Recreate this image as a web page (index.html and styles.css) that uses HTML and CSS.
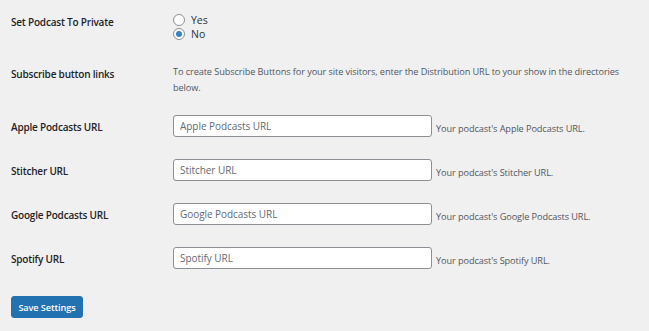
FILE: index.html
```html
<!DOCTYPE html>
<html lang="en">

<head>
  <meta charset="UTF-8" />
  <meta name="viewport" content="width=device-width, initial-scale=1" />
  <title>Podcast Settings</title>
  <link rel="stylesheet" href="styles.css">
</head>

<body>

  <form class="settings">
    <div class="form-row first">
      <div class="row-label">Set Podcast To Private</div>
      <div class="row-field">
        <label class="radio"><input type="radio" name="private" value="yes" /> Yes</label>
        <label class="radio"><input type="radio" name="private" value="no" checked /> No</label>
      </div>
    </div>

    <div class="form-row intro">
      <div class="row-label">Subscribe button links</div>
      <div class="row-field">
        <p class="description">To create Subscribe Buttons for your site visitors, enter the Distribution URL to your show in the directories below.</p>
      </div>
    </div>

    <div class="form-row url">
      <label class="row-label" for="appleUrl">Apple Podcasts URL</label>
      <div class="row-field">
        <input type="text" id="appleUrl" placeholder="Apple Podcasts URL" />
        <span class="hint">Your podcast's Apple Podcasts URL.</span>
      </div>
    </div>

    <div class="form-row url">
      <label class="row-label" for="stitcherUrl">Stitcher URL</label>
      <div class="row-field">
        <input type="text" id="stitcherUrl" placeholder="Stitcher URL" />
        <span class="hint">Your podcast's Stitcher URL.</span>
      </div>
    </div>

    <div class="form-row url">
      <label class="row-label" for="googleUrl">Google Podcasts URL</label>
      <div class="row-field">
        <input type="text" id="googleUrl" placeholder="Google Podcasts URL" />
        <span class="hint">Your podcast's Google Podcasts URL.</span>
      </div>
    </div>

    <div class="form-row url">
      <label class="row-label" for="spotifyUrl">Spotify URL</label>
      <div class="row-field">
        <input type="text" id="spotifyUrl" placeholder="Spotify URL" />
        <span class="hint">Your podcast's Spotify URL.</span>
      </div>
    </div>

    <button type="button" class="save-btn">Save Settings</button>
  </form>

</body>

</html>
```

FILE: styles.css
```css
body {
  font-family: "Open Sans", "Noto Sans", Arial, sans-serif;
  background: #f0f0f1;
  color: #1d2327;
  margin: 0;
  padding: 0;
}

.settings {
  padding: 2px 11px 0;
}

.form-row {
  display: grid;
  grid-template-columns: 162px 1fr;
  align-items: start;
}

.row-label {
  font-size: 10px;
  font-weight: 600;
  letter-spacing: -0.2px;
  line-height: 14px;
  color: #1d2327;
}

.row-field {
  padding: 11px 0;
}

.first .row-label {
  padding-top: 13px;
}

.first .row-field {
  padding-bottom: 12px;
}

.radio {
  display: flex;
  align-items: center;
  gap: 6px;
  font-size: 10.5px;
  line-height: 14px;
  color: #2c3338;
}

.radio input {
  appearance: none;
  margin: 0;
  width: 12px;
  height: 12px;
  border: 1px solid #8c8f94;
  border-radius: 50%;
  background: white;
  box-sizing: border-box;
  display: grid;
  place-items: center;
}

.radio input:checked::before {
  content: "";
  width: 6px;
  height: 6px;
  border-radius: 50%;
  background: #3582c4;
}

.intro .row-label {
  padding-top: 14px;
}

.intro .row-field {
  padding-bottom: 8px;
}

.description {
  margin: 0;
  font-size: 9.2px;
  letter-spacing: -0.1px;
  line-height: 16px;
  color: #50575e;
}

.url .row-label {
  padding-top: 16px;
}

.url .row-field {
  display: flex;
  align-items: center;
}

input[type="text"] {
  width: 259px;
  height: 22px;
  padding: 0 6px;
  margin: 0;
  border: 1px solid #8c8f94;
  border-radius: 3px;
  background: white;
  font-family: inherit;
  font-size: 10px;
  letter-spacing: -0.05px;
  color: #2c3338;
  box-sizing: border-box;
}

input[type="text"]::placeholder {
  color: #646970;
}

.hint {
  margin-left: 4px;
  margin-top: 4px;
  font-size: 9.2px;
  letter-spacing: -0.1px;
  color: #50575e;
}

.save-btn {
  margin-top: 16px;
  width: 72px;
  height: 22px;
  padding: 0;
  background: #2271b1;
  border: 1px solid #2271b1;
  border-radius: 3px;
  color: white;
  font-family: inherit;
  font-size: 9.2px;
  font-weight: 600;
  letter-spacing: -0.1px;
  cursor: pointer;
}

.save-btn:hover {
  background: #135e96;
}
```
